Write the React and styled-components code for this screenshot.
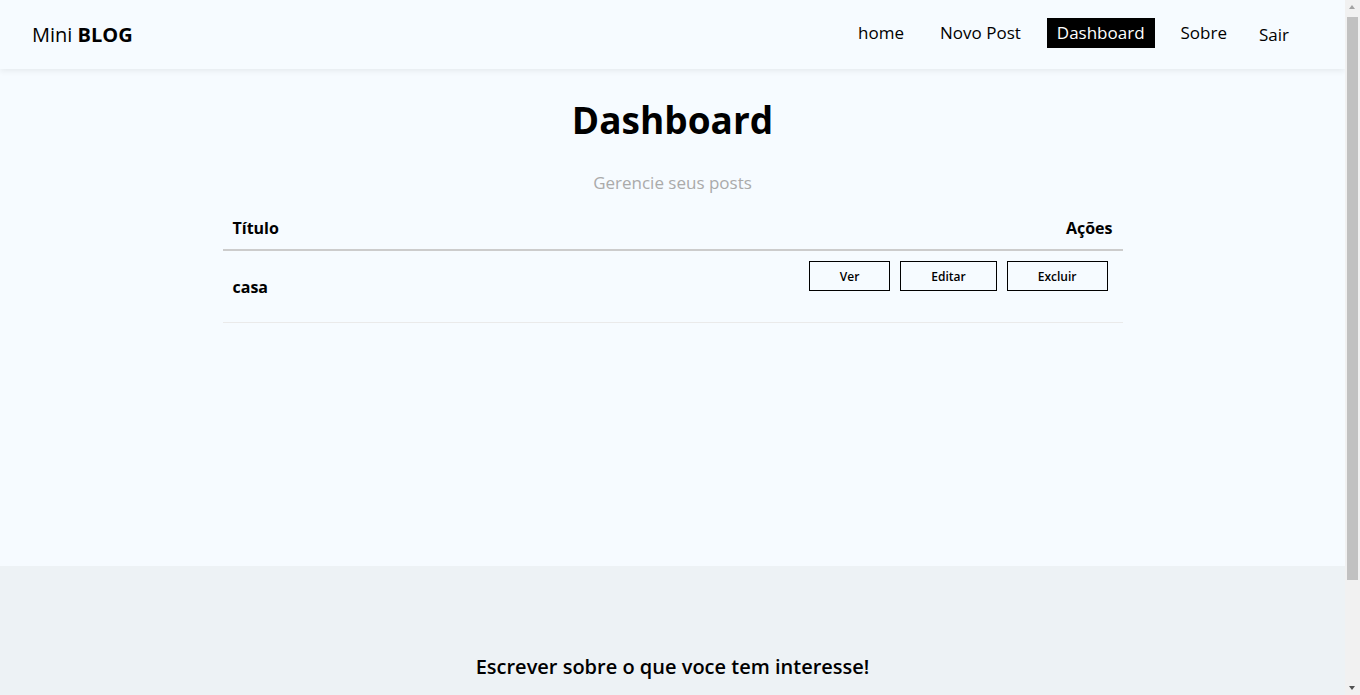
import React from "react";
import styled, { createGlobalStyle } from "styled-components";

const GlobalStyle = createGlobalStyle`
  * { box-sizing: border-box; }
  body {
    margin: 0;
    font-family: 'Open Sans', 'Liberation Sans', sans-serif;
    background-color: #f6fbff;
    color: #000;
  }
`;

const Page = styled.div`
  width: calc(100% - 15px);
`;

// the browser scrollbar seen in the screenshot
const ScrollTrack = styled.div`
  position: fixed;
  top: 0;
  right: 0;
  width: 15px;
  height: 100vh;
  background-color: #f1f1f1;
  z-index: 10;
`;

const ScrollThumb = styled.div`
  position: absolute;
  top: 17px;
  left: 2px;
  width: 11px;
  height: 563px;
  background-color: #c1c1c1;
`;

const ScrollArrow = styled.div`
  position: absolute;
  left: 4px;
  width: 0;
  height: 0;
  border-left: 3.5px solid transparent;
  border-right: 3.5px solid transparent;
  ${(p) =>
    p.$down
      ? "bottom: 5px; border-top: 4px solid #505050;"
      : "top: 5px; border-bottom: 4px solid #a3a3a3;"}
`;

const Navbar = styled.nav`
  display: flex;
  align-items: center;
  justify-content: space-between;
  height: 69px;
  padding: 0 32px;
  background-color: #f6fbff;
  box-shadow: 0 2px 6px rgba(0, 0, 0, 0.07);
  position: relative;
  z-index: 2;
`;

const Brand = styled.a`
  font-size: 20px;
  color: #000;
  text-decoration: none;
  span {
    font-weight: 700;
  }
`;

const Links = styled.ul`
  display: flex;
  align-items: flex-start;
  list-style: none;
  margin: 0 0 2px;
  padding: 0;
`;

const NavLink = styled.a`
  display: block;
  margin-right: 16px;
  padding: 5px 10px;
  font-size: 17px;
  line-height: 20px;
  color: ${(p) => (p.$active ? "#fff" : "#000")};
  background-color: ${(p) => (p.$active ? "#000" : "transparent")};
  text-decoration: none;
  cursor: pointer;
`;

const LogoutButton = styled.button`
  margin: 2px 18px 0 0;
  padding: 5px 6px;
  font-family: inherit;
  font-size: 17px;
  line-height: 20px;
  color: #000;
  background: transparent;
  border: none;
  cursor: pointer;
`;

const Main = styled.main`
  min-height: 497px;
  padding-top: 29px;
  display: flex;
  flex-direction: column;
  align-items: center;
`;

const Title = styled.h2`
  margin: 0;
  font-size: 37px;
  line-height: 43px;
  font-weight: 700;
`;

const Subtitle = styled.p`
  margin: 31px 0 13px;
  font-size: 17px;
  line-height: 22px;
  color: #aaa;
`;

const Table = styled.div`
  width: 900px;
`;

const HeadRow = styled.div`
  display: flex;
  justify-content: space-between;
  padding: 10px;
  font-size: 16px;
  line-height: 22px;
  font-weight: 700;
  border-bottom: 2px solid #ccc;
`;

const PostRow = styled.div`
  display: flex;
  justify-content: space-between;
  height: 72px;
  padding: 10px 15px 10px 10px;
  border-bottom: 1px solid #eaeaea;
`;

const PostTitle = styled.p`
  margin: 0;
  align-self: center;
  font-size: 16px;
  font-weight: 700;
`;

const Actions = styled.div`
  display: flex;
  gap: 10px;
  align-items: flex-start;
`;

const ActionButton = styled.button`
  height: 30px;
  padding: 0 30px;
  font-family: inherit;
  font-size: 12px;
  font-weight: 600;
  color: #000;
  background: transparent;
  border: 1px solid #000;
  cursor: pointer;
`;

const Footer = styled.footer`
  height: 200px;
  background-color: #edf2f5;
  display: flex;
  align-items: center;
  justify-content: center;
  h3 {
    margin: 0;
    font-size: 20px;
    font-weight: 600;
  }
`;

const links = ["home", "Novo Post", "Dashboard", "Sobre"];

const App = () => {
  return (
    <>
      <GlobalStyle />
      <Page>
        <Navbar>
          <Brand href="#">
            Mini <span>BLOG</span>
          </Brand>
          <Links>
            {links.map((link) => (
              <li key={link}>
                <NavLink $active={link === "Dashboard"}>{link}</NavLink>
              </li>
            ))}
            <li>
              <LogoutButton>Sair</LogoutButton>
            </li>
          </Links>
        </Navbar>
        <Main>
          <Title>Dashboard</Title>
          <Subtitle>Gerencie seus posts</Subtitle>
          <Table>
            <HeadRow>
              <span>Título</span>
              <span>Ações</span>
            </HeadRow>
            <PostRow>
              <PostTitle>casa</PostTitle>
              <Actions>
                <ActionButton>Ver</ActionButton>
                <ActionButton>Editar</ActionButton>
                <ActionButton>Excluir</ActionButton>
              </Actions>
            </PostRow>
          </Table>
        </Main>
        <Footer>
          <h3>Escrever sobre o que voce tem interesse!</h3>
        </Footer>
      </Page>
      <ScrollTrack>
        <ScrollArrow />
        <ScrollThumb />
        <ScrollArrow $down />
      </ScrollTrack>
    </>
  );
};

export default App;
